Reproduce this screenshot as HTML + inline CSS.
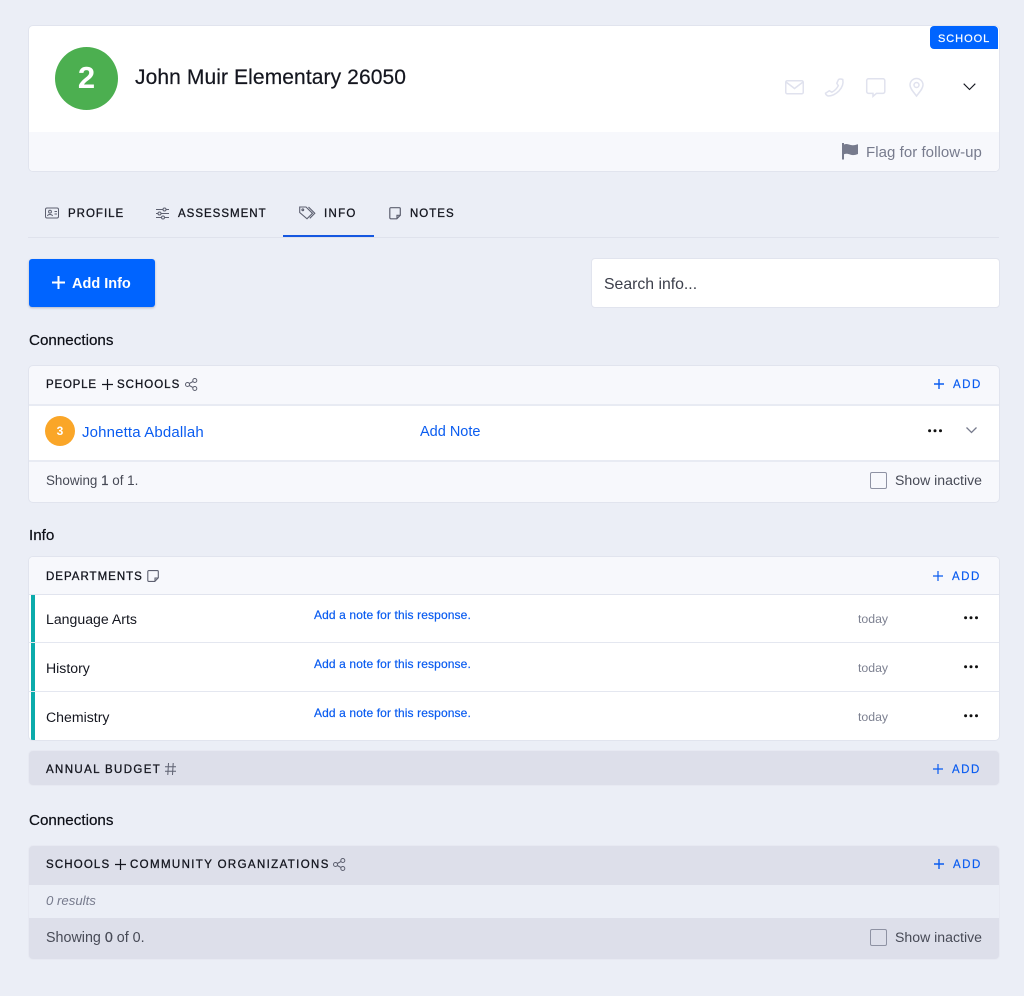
<!DOCTYPE html>
<html><head><meta charset="utf-8"><style>
html,body{margin:0;padding:0}
body{width:1024px;height:996px;background:#ebeef6;position:relative;overflow:hidden;font-family:"Liberation Sans",sans-serif;color:#14161f}
.a{position:absolute}
.t{position:absolute;white-space:nowrap;line-height:20px}
.box{position:absolute;left:28px;width:970px;border:1px solid #e1e4ee;border-radius:5px;overflow:hidden;box-sizing:content-box}
.tab{font-size:11.5px;letter-spacing:1px;font-weight:400;color:#14161f;-webkit-text-stroke:.3px #14161f}
.hd{font-size:11.5px;letter-spacing:1px;color:#14161f;-webkit-text-stroke:.3px #14161f}
.add{font-size:11.5px;letter-spacing:1.5px;color:#0a5cf0;-webkit-text-stroke:.2px #0a5cf0}
.lab{font-size:15.2px;color:#0d0f17;-webkit-text-stroke:.2px #0d0f17}
.lnk{font-size:12px;color:#0a5cf0;-webkit-text-stroke:.2px #0a5cf0;letter-spacing:.12px}
.td{font-size:12.3px;color:#7d8191}
.row{font-size:14.1px;color:#14161f}
.ft{font-size:14.1px;color:#474a56}
svg{position:absolute;overflow:visible;fill:none}
.cb{position:absolute;width:15px;height:15px;border:1px solid #8e92a3;border-radius:2px;background:#f7f8fc}
</style></head><body>

<!-- header card -->
<div class="a" style="left:28px;top:25px;width:970px;height:145px;background:#fff;border:1px solid #e1e4ee;border-radius:5px;overflow:hidden">
  <div class="a" style="left:0;top:106px;width:970px;height:39px;background:#f7f8fc"></div>
</div>
<div class="a" style="left:930px;top:26px;width:68px;height:23px;background:#0064ff;border-radius:4px 4px 0 4px"></div>
<div class="t" style="left:938px;top:29px;font-size:11px;letter-spacing:.95px;color:#fff;-webkit-text-stroke:.2px #fff">SCHOOL</div>
<div class="a" style="left:55px;top:47px;width:63px;height:63px;border-radius:50%;background:#4caf50"></div>
<div class="t" style="left:55px;top:63px;width:63px;text-align:center;font-size:31px;line-height:30px;font-weight:700;color:#fff">2</div>
<div class="t" style="left:135px;top:67px;font-size:21px;letter-spacing:.1px;color:#14161f;line-height:22px;-webkit-text-stroke:.2px #14161f" >John Muir Elementary 26050</div>

<svg style="left:785px;top:80px" width="19" height="15" stroke="#e0e2ee" stroke-width="1.5"><rect x=".75" y=".75" width="17.5" height="13" rx="1.5"/><path d="M1 2l8.5 6.5L18 2"/></svg>
<svg style="left:825px;top:78px" width="20" height="20" stroke="#e0e2ee" stroke-width="1.5"><path d="M13.5 1.5c1.5-.8 3-.5 4.3 0 .8 4-.7 8-3.7 11.3-3 3-6.6 5-10.8 5.2-1.5-.5-2.6-1.5-2.8-2.8l3.8-2.5 2.5 1.5c2.8-1.3 5-3.600 6.500-6.500l-1.500-2.500z"/></svg>
<svg style="left:866px;top:78px" width="20" height="20" stroke="#e0e2ee" stroke-width="1.5"><path d="M2.500.75h14.500a1.800 1.800 0 0 1 1.800 1.800v11a1.800 1.800 0 0 1-1.800 1.800h-6.500l-3.500 3v-3H2.500a1.800 1.800 0 0 1-1.800-1.800v-11a1.800 1.800 0 0 1 1.800-1.800z"/></svg>
<svg style="left:909px;top:78px" width="16" height="19" stroke="#e0e2ee" stroke-width="1.5"><path d="M7.500 18C4.500 14 1 10.500 1 7a6.500 6.500 0 0 1 13 0c0 3.500-3.500 7-6.500 11z"/><circle cx="7.500" cy="7" r="2.500"/></svg>
<svg style="left:963px;top:83px" width="13" height="8" stroke="#14161f" stroke-width="1.100"><path d="M.7.7l5.800 5.800L12.300.7"/></svg>

<svg style="left:842px;top:143px" width="17" height="17"><path d="M1 0v16.500" stroke="#777b8d" stroke-width="2"/><path d="M2 1.500c4-1.500 5.500 1 9 .7 2-.2 3.500-.6 5-1V11c-2 .8-3.500 1.100-5 1.100-3.500 0-5-2.300-9-.8z" fill="#777b8d"/></svg>
<div class="t" style="left:866px;top:143px;font-size:15px;letter-spacing:.05px;color:#777b8d">Flag for follow-up</div>

<!-- tabs -->
<div class="a" style="left:28px;top:237px;width:971px;height:1px;background:#dfe2ec"></div>
<div class="a" style="left:283px;top:235px;width:91px;height:2px;background:#1557e0"></div>
<svg style="left:45px;top:207px" width="14" height="12" stroke="#5d6070" stroke-width="1"><rect x=".5" y="1" width="13" height="10" rx="1.500"/><circle cx="5" cy="4.700" r="1.400"/><path d="M2.500 9c.3-2 4.500-2 5 0M9.500 4.500h2.500M9.500 7h2.500"/></svg>
<div class="t tab" style="left:68px;top:204px">PROFILE</div>
<svg style="left:156px;top:207px" width="13" height="13" stroke="#5d6070" stroke-width="1"><path d="M0 2.500h13M0 6.500h13M0 10.500h13"/><circle cx="8.500" cy="2.500" r="1.500" fill="#ebeef6"/><circle cx="3.500" cy="6.500" r="1.500" fill="#ebeef6"/><circle cx="7" cy="10.500" r="1.500" fill="#ebeef6"/></svg>
<div class="t tab" style="left:178px;top:204px">ASSESSMENT</div>
<svg style="left:299px;top:206px" width="17" height="14" stroke="#5d6070" stroke-width="1.100"><path d="M.7 1h6.300l6.500 6.300-5.500 5.500L.7 6.500z"/><path d="M9.500 1l6.300 6.300-5 5"/><circle cx="3.800" cy="3.800" r=".9"/></svg>
<div class="t tab" style="left:324px;top:204px;letter-spacing:1.3px">INFO</div>
<svg style="left:389px;top:207px" width="12" height="13" stroke="#5d6070" stroke-width="1.200"><path d="M1.800.7h8.500a1 1 0 0 1 1 1v6.500l-3.500 3.600H1.800a1 1 0 0 1-1-1V1.700a1 1 0 0 1 1-1z"/><path d="M11 8.300H8v3.300"/></svg>
<div class="t tab" style="left:410px;top:204px">NOTES</div>

<!-- actions -->
<div class="a" style="left:29px;top:259px;width:126px;height:48px;background:#0064ff;border-radius:3px;box-shadow:0 1px 2px rgba(40,50,90,.3)"></div>
<svg style="left:52px;top:276px" width="13" height="13" stroke="#fff" stroke-width="2"><path d="M6.500 0v13M0 6.500h13"/></svg>
<div class="t" style="left:72px;top:274px;font-size:14.5px;font-weight:700;color:#fff">Add Info</div>
<div class="a" style="left:591px;top:258px;width:407px;height:48px;background:#fff;border:1px solid #e1e4ee;border-radius:4px"></div>
<div class="t" style="left:604px;top:275px;font-size:15.8px;color:#3c3f4b">Search info...</div>

<div class="t lab" style="left:29px;top:331px">Connections</div>

<!-- panel 1 -->
<div class="box" style="top:365px;height:136px;background:#f7f8fc">
  <div class="a" style="left:0;top:38px;width:970px;height:2px;background:#e8ebf3"></div>
  <div class="a" style="left:0;top:40px;width:970px;height:54px;background:#fff"></div>
  <div class="a" style="left:0;top:94px;width:970px;height:2px;background:#e8ebf3"></div>
</div>
<div class="t hd" style="left:46px;top:375px;letter-spacing:.8px">PEOPLE</div>
<svg style="left:102px;top:379px" width="11" height="11" stroke="#14161f" stroke-width="1.200"><path d="M5.500 0v11M0 5.500h11"/></svg>
<div class="t hd" style="left:117px;top:375px">SCHOOLS</div>
<svg style="left:185px;top:378px" width="13" height="13" stroke="#5d6070" stroke-width="1"><circle cx="2.500" cy="6.500" r="2"/><circle cx="9.800" cy="2.500" r="2"/><circle cx="9.800" cy="10.500" r="2"/><path d="M4.300 5.500l3.700-2M4.300 7.500l3.700 2"/></svg>
<svg style="left:934px;top:379px" width="10" height="10" stroke="#0a5cf0" stroke-width="1.400"><path d="M5 0v10M0 5h10"/></svg>
<div class="t add" style="left:953px;top:375px">ADD</div>
<div class="a" style="left:45px;top:416px;width:30px;height:30px;border-radius:50%;background:#faa628"></div>
<div class="t" style="left:45px;top:421px;width:30px;text-align:center;font-size:12px;font-weight:700;color:#fff">3</div>
<div class="t" style="left:82px;top:423px;font-size:15px;color:#0a5cf0;letter-spacing:.15px">Johnetta Abdallah</div>
<div class="t" style="left:420px;top:422px;font-size:14.500px;color:#0a5cf0">Add Note</div>
<svg style="left:928px;top:429px" width="15" height="4" fill="#111"><circle cx="1.600" cy="1.800" r="1.500" fill="#111"/><circle cx="7" cy="1.800" r="1.500" fill="#111"/><circle cx="12.500" cy="1.800" r="1.500" fill="#111"/></svg>
<svg style="left:966px;top:427px" width="11" height="7" stroke="#777b8d" stroke-width="1.300"><path d="M.5.500l5 5 5-5"/></svg>
<div class="t ft" style="left:46px;top:471px;font-size:13.4px">Showing <span style="-webkit-text-stroke:.2px">1</span> of 1.</div>
<div class="cb" style="left:870px;top:472px"></div>
<div class="t ft" style="left:895px;top:470px">Show inactive</div>

<div class="t lab" style="left:29px;top:526px">Info</div>

<!-- panel 2 -->
<div class="box" style="top:556px;height:183px;background:#fff">
  <div class="a" style="left:0;top:0;width:970px;height:37px;background:#f7f8fc;border-bottom:1px solid #e1e4ee"></div>
  <div class="a" style="left:0;top:85px;width:970px;height:1px;background:#e4e7f0"></div>
  <div class="a" style="left:0;top:134px;width:970px;height:1px;background:#e4e7f0"></div>
  <div class="a" style="left:2px;top:38px;width:4px;height:47px;background:#0cabab"></div>
  <div class="a" style="left:2px;top:86px;width:4px;height:48px;background:#0cabab"></div>
  <div class="a" style="left:2px;top:135px;width:4px;height:48px;background:#0cabab"></div>
</div>
<div class="t hd" style="left:46px;top:567px">DEPARTMENTS</div>
<svg style="left:147px;top:570px" width="12" height="12" stroke="#5d6070" stroke-width="1.100"><path d="M1.800.6h8.500a1 1 0 0 1 1 1v6.200l-3.500 3.600H1.800a1 1 0 0 1-1-1V1.600a1 1 0 0 1 1-1z"/><path d="M11 8H8v3"/></svg>
<svg style="left:933px;top:571px" width="10" height="10" stroke="#0a5cf0" stroke-width="1.200"><path d="M5 0v10M0 5h10"/></svg>
<div class="t add" style="left:952px;top:567px">ADD</div>

<div class="t row" style="left:46px;top:609px">Language Arts</div>
<div class="t lnk" style="left:314px;top:605px">Add a note for this response.</div>
<div class="t td" style="left:858px;top:609px">today</div>
<svg style="left:964px;top:616px" width="15" height="4"><circle cx="1.600" cy="1.800" r="1.500" fill="#111"/><circle cx="7" cy="1.800" r="1.500" fill="#111"/><circle cx="12.500" cy="1.800" r="1.500" fill="#111"/></svg>

<div class="t row" style="left:46px;top:658px">History</div>
<div class="t lnk" style="left:314px;top:654px">Add a note for this response.</div>
<div class="t td" style="left:858px;top:658px">today</div>
<svg style="left:964px;top:665px" width="15" height="4"><circle cx="1.600" cy="1.800" r="1.500" fill="#111"/><circle cx="7" cy="1.800" r="1.500" fill="#111"/><circle cx="12.500" cy="1.800" r="1.500" fill="#111"/></svg>

<div class="t row" style="left:46px;top:707px">Chemistry</div>
<div class="t lnk" style="left:314px;top:703px">Add a note for this response.</div>
<div class="t td" style="left:858px;top:707px">today</div>
<svg style="left:964px;top:714px" width="15" height="4"><circle cx="1.600" cy="1.800" r="1.500" fill="#111"/><circle cx="7" cy="1.800" r="1.500" fill="#111"/><circle cx="12.500" cy="1.800" r="1.500" fill="#111"/></svg>

<!-- budget -->
<div class="box" style="top:750px;height:34px;background:#dddfea;border-color:#e7e9f2"></div>
<div class="t hd" style="left:46px;top:760px;letter-spacing:1.37px">ANNUAL BUDGET</div>
<svg style="left:165px;top:763px" width="11" height="12" stroke="#5d6070" stroke-width="1"><path d="M3.500 0L2.800 12M8.200 0L7.500 12M0 3.800h11M0 8.200h11"/></svg>
<svg style="left:933px;top:764px" width="10" height="10" stroke="#0a5cf0" stroke-width="1.200"><path d="M5 0v10M0 5h10"/></svg>
<div class="t add" style="left:952px;top:760px">ADD</div>

<div class="t lab" style="left:29px;top:811px">Connections</div>

<!-- panel 3 -->
<div class="box" style="top:845px;height:113px;background:#dddfea;border-color:#e7e9f2">
  <div class="a" style="left:0;top:39px;width:970px;height:33px;background:#ebeef6"></div>
</div>
<div class="t hd" style="left:46px;top:855px;letter-spacing:1.15px">SCHOOLS</div>
<svg style="left:115px;top:859px" width="11" height="11" stroke="#14161f" stroke-width="1.200"><path d="M5.500 0v11M0 5.500h11"/></svg>
<div class="t hd" style="left:130px;top:855px;letter-spacing:1.37px">COMMUNITY ORGANIZATIONS</div>
<svg style="left:333px;top:858px" width="13" height="13" stroke="#5d6070" stroke-width="1"><circle cx="2.500" cy="6.500" r="2"/><circle cx="9.800" cy="2.500" r="2"/><circle cx="9.800" cy="10.500" r="2"/><path d="M4.300 5.500l3.700-2M4.300 7.500l3.700 2"/></svg>
<svg style="left:934px;top:859px" width="10" height="10" stroke="#0a5cf0" stroke-width="1.400"><path d="M5 0v10M0 5h10"/></svg>
<div class="t add" style="left:953px;top:855px">ADD</div>
<div class="t" style="left:46px;top:891px;font-size:13.2px;font-style:italic;color:#777b8d">0 results</div>
<div class="t ft" style="left:46px;top:928px;font-size:14.3px">Showing <span style="-webkit-text-stroke:.2px">0</span> of 0.</div>
<div class="cb" style="left:870px;top:929px;background:#dddfea"></div>
<div class="t ft" style="left:895px;top:927px">Show inactive</div>

</body></html>
